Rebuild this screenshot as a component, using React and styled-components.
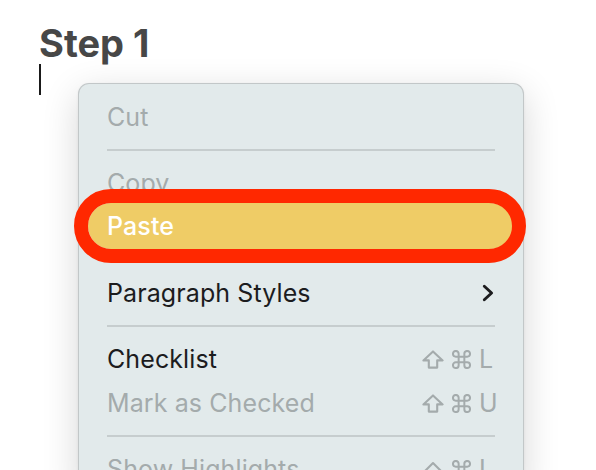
import React from 'react';
import styled, { createGlobalStyle } from 'styled-components';

const Global = createGlobalStyle`
  html, body {
    margin: 0;
    background: #fff;
    overflow: hidden;
  }
  body {
    font-family: Inter, "Liberation Sans", sans-serif;
    -webkit-font-smoothing: antialiased;
  }
`

const Page = styled.div`
  width: 596px;
  height: 470px;
  overflow: hidden;
  padding: 24px 0 0 39px;
  box-sizing: border-box;
`
const Title = styled.h1`
  margin: 0;
  font-size: 38px;
  line-height: 38px;
  font-weight: 700;
  color: #474747;
  letter-spacing: 0;
`
const Body = styled.div`
  display: flex;
  align-items: flex-start;
  margin-top: 2px;
`
const Caret = styled.div`
  width: 2px;
  height: 31px;
  background: #1a1a1a;
`
const Menu = styled.div`
  margin: 19px 0 0 37px;
  width: 446px;
  background: #e2eaeb;
  border: 1px solid #c2c7c8;
  border-bottom: none;
  border-radius: 11px 11px 0 0;
  box-shadow: 0 10px 36px rgba(0, 0, 0, 0.16), 0 1px 3px rgba(0, 0, 0, 0.06);
  padding: 11px 0 0;
  box-sizing: border-box;
`
const Row = styled.div`
  position: relative;
  height: ${p => p.tall ? 46 : 44}px;
  margin: ${p => p.tall ? -2 : 0}px 10px 0 9px;
  padding: 0 19px 0 19px;
  display: flex;
  align-items: center;
  justify-content: space-between;
  border-radius: 23px;
  font-size: 25px;
  letter-spacing: 0.1px;
  color: ${p => p.active ? '#fff' : p.disabled ? '#a4abac' : '#1c1c1e'};
  background: ${p => p.active ? '#efcc66' : 'transparent'};
  font-weight: ${p => p.active ? 500 : 400};
`
const Divider = styled.div`
  height: 2px;
  margin: 10px 28px;
  background: #c6cdce;
`
const Ring = styled.div`
  position: absolute;
  top: -14px;
  bottom: -14px;
  left: -14px;
  right: -13px;
  border: 14px solid #ff2800;
  border-radius: 40px;
  pointer-events: none;
`
const Keys = styled.span`
  display: flex;
  align-items: center;
  gap: 8px;
  font-size: 25px;
  color: #a4abac;
  margin-right: -1px;
`
const Letter = styled.span`
  width: 16px;
  text-align: left;
`

const Chevron = () => (
  <svg width="12" height="18" viewBox="0 0 12 18">
    <path d="M2.3 2.2 L9.6 9 L2.3 15.8" fill="none" stroke="#1c1c1e" strokeWidth="2.9" strokeLinecap="round" strokeLinejoin="round" />
  </svg>
)

const ShiftKey = () => (
  <svg width="22" height="19" viewBox="0 0 22 19">
    <path d="M11 1.4 L20.6 10.4 H15.2 V17.6 H6.8 V10.4 H1.4 Z" fill="none" stroke="#a4abac" strokeWidth="2.1" strokeLinejoin="round" />
  </svg>
)

const ControlKey = () => (
  <svg width="22" height="19" viewBox="0 0 22 19">
    <path d="M3 11 L11 3 L19 11" fill="none" stroke="#a4abac" strokeWidth="2.1" strokeLinecap="round" strokeLinejoin="round" />
  </svg>
)

const CommandKey = () => (
  <svg width="19" height="19" viewBox="2 2 20 20">
    <path d="M15 6v12a3 3 0 1 0 3-3H6a3 3 0 1 0 3 3V6a3 3 0 1 0-3 3h12a3 3 0 1 0-3-3" fill="none" stroke="#a4abac" strokeWidth="2.1" strokeLinecap="round" strokeLinejoin="round" />
  </svg>
)

const Shortcut = ({ control, letter }) => (
  <Keys>
    {control ? <ControlKey /> : <ShiftKey />}
    <CommandKey />
    <Letter>{letter}</Letter>
  </Keys>
)

export default function App() {
  return (
    <Page>
      <Global />
      <Title>Step 1</Title>
      <Body>
        <Caret />
        <Menu>
          <Row disabled>Cut</Row>
          <Divider />
          <Row disabled>Copy</Row>
          <Row active tall>
            Paste
            <Ring />
          </Row>
          <Divider />
          <Row>
            Paragraph Styles
            <Chevron />
          </Row>
          <Divider />
          <Row>
            Checklist
            <Shortcut letter="L" />
          </Row>
          <Row disabled>
            Mark as Checked
            <Shortcut letter="U" />
          </Row>
          <Divider />
          <Row disabled>
            Show Highlights
            <Shortcut control letter="I" />
          </Row>
        </Menu>
      </Body>
    </Page>
  );
}
